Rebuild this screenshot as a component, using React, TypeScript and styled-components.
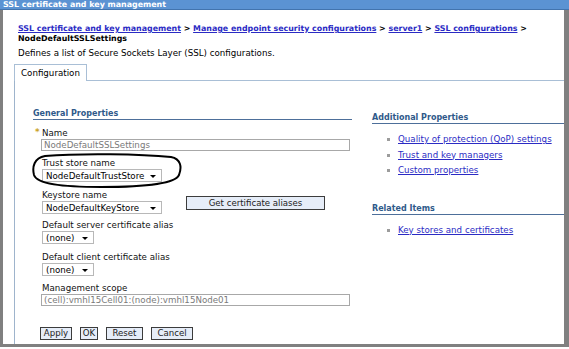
import React from 'react';
import styled, { createGlobalStyle } from 'styled-components';

const Global = createGlobalStyle`
  html, body { margin: 0; padding: 0; background: #fff; }
  body { font-family: "DejaVu Sans", Verdana, sans-serif; font-size: 8.7px; color: #000; }
  * { box-sizing: border-box; }
`;

const Window = styled.div`
  width: 569px;
  height: 347px;
  display: flex;
  flex-direction: column;
`;

const TitleBar = styled.div`
  height: 10px;
  background: #5b93d3;
  color: #fff;
  font-weight: bold;
  font-size: 7.9px;
  line-height: 9px;
  padding-left: 3px;
  border-bottom: 1px solid #4274ae;
  white-space: nowrap;
`;

const Frame = styled.div`
  flex: 1;
  display: flex;
  flex-direction: column;
  border-left: 3px solid #808080;
  border-right: 5px solid #808080;
  border-bottom: 3px solid #808080;
`;

const Breadcrumb = styled.div`
  margin: 14px 0 0 15px;
  font-weight: bold;
  font-size: 7.9px;
  line-height: 10px;
  white-space: nowrap;
`;

const CrumbLink = styled.a`
  color: #2b2bc4;
  text-decoration: underline;
`;

const Description = styled.div`
  margin: 4px 0 0 15px;
  line-height: 10px;
`;

const TabRow = styled.div`
  display: flex;
  margin: 6px 0 0 11px;
  position: relative;
  z-index: 1;
`;

const Tab = styled.div`
  height: 17px;
  padding: 0 6px;
  border: 1px solid #a9bfd6;
  border-bottom: none;
  background: #fff;
  line-height: 17px;
  margin-bottom: -1px;
`;

const Panel = styled.div`
  flex: 1;
  margin-left: 11px;
  border-left: 1px solid #9eb4cc;
  border-top: 1px solid #a9bfd6;
  display: flex;
  padding: 28px 0 0 18px;
`;

const LeftColumn = styled.div`
  width: 319px;
  display: flex;
  flex-direction: column;
  position: relative;
`;

const RightColumn = styled.div`
  flex: 1;
  margin-left: 20px;
  padding-top: 4px;
  display: flex;
  flex-direction: column;
`;

const SectionHeader = styled.div<{ $gap?: number }>`
  color: #2f5a8a;
  font-weight: bold;
  font-size: 8px;
  line-height: 9px;
  padding-bottom: 1px;
  border-bottom: 1px solid #4d6f9a;
  margin-top: ${(p) => p.$gap ?? 0}px;
`;

const Fields = styled.div`
  padding-left: 9px;
  margin-top: 9px;
  display: flex;
  flex-direction: column;
`;

const Field = styled.div<{ $gap?: number }>`
  display: flex;
  flex-direction: column;
  margin-top: ${(p) => p.$gap ?? 0}px;
`;

const Label = styled.div`
  line-height: 9px;
  margin-bottom: 1px;
  color: #111;
  position: relative;
  white-space: nowrap;
`;

const Star = styled.span`
  position: absolute;
  left: -7px;
  top: -1px;
  color: #c9a227;
  font-weight: bold;
`;

const TextInput = styled.div`
  height: 12px;
  width: 309px;
  margin-left: -1px;
  border: 1px solid #a8a8a8;
  color: #7a7a7a;
  line-height: 10px;
  padding-left: 2px;
  white-space: nowrap;
  overflow: hidden;
`;

const Select = styled.div<{ $w: number }>`
  width: ${(p) => p.$w}px;
  height: 13px;
  border: 1px solid #b8b8b8;
  display: flex;
  align-items: center;
  padding: 0 5px 0 3px;
  white-space: nowrap;
  background: #fff;
`;

const Arrow = styled.span`
  margin-left: auto;
  width: 0;
  height: 0;
  border-left: 3px solid transparent;
  border-right: 3px solid transparent;
  border-top: 3px solid #000;
  margin-top: 1px;
`;

const KeyRow = styled.div`
  display: flex;
  align-items: flex-start;
  margin-top: 9px;
`;

const Button = styled.button<{ $w: number }>`
  font-family: "DejaVu Sans", Verdana, sans-serif;
  font-size: 8.6px;
  width: ${(p) => p.$w}px;
  height: 13px;
  padding: 0;
  line-height: 11px;
  background: #e6edf8;
  border: 1px solid #3c3c3c;
  color: #222;
  cursor: pointer;
  white-space: nowrap;
`;

const AliasButton = styled(Button)`
  margin: 5px 0 0 24px;
  height: 14px;
`;

const ButtonBar = styled.div`
  display: flex;
  gap: 8px;
  margin: 21px 0 0 7px;
`;

const LinkList = styled.ul<{ $gap: number }>`
  list-style: none;
  margin: ${(p) => p.$gap}px 0 0 0;
  padding: 0 0 0 15px;
`;

const LinkItem = styled.li`
  line-height: 15.5px;
  display: flex;
  align-items: center;
  white-space: nowrap;
`;

const Bullet = styled.span`
  width: 3px;
  height: 3px;
  background: #9c9c9c;
  margin-right: 8px;
`;

const ItemLink = styled.a`
  color: #2b2bc4;
  text-decoration: underline;
`;

const Annotation = styled.svg`
  position: absolute;
  left: -2px;
  top: 44px;
  pointer-events: none;
`;

export default function App() {
  return (
    <>
      <Global />
      <Window>
        <TitleBar>SSL certificate and key management</TitleBar>
        <Frame>
          <Breadcrumb>
            <CrumbLink>SSL certificate and key management</CrumbLink> &gt;{' '}
            <CrumbLink>Manage endpoint security configurations</CrumbLink> &gt;{' '}
            <CrumbLink>server1</CrumbLink> &gt; <CrumbLink>SSL configurations</CrumbLink> &gt;
            <br />
            NodeDefaultSSLSettings
          </Breadcrumb>
          <Description>Defines a list of Secure Sockets Layer (SSL) configurations.</Description>
          <TabRow>
            <Tab>Configuration</Tab>
          </TabRow>
          <Panel>
            <LeftColumn>
              <SectionHeader>General Properties</SectionHeader>
              <Fields>
                <Field>
                  <Label>
                    <Star>*</Star>Name
                  </Label>
                  <TextInput>NodeDefaultSSLSettings</TextInput>
                </Field>
                <Field $gap={8}>
                  <Label>Trust store name</Label>
                  <Select $w={120}>
                    NodeDefaultTrustStore
                    <Arrow />
                  </Select>
                </Field>
                <KeyRow>
                  <Field>
                    <Label>Keystore name</Label>
                    <Select $w={120}>
                      NodeDefaultKeyStore
                      <Arrow />
                    </Select>
                  </Field>
                  <AliasButton $w={139}>Get certificate aliases</AliasButton>
                </KeyRow>
                <Field $gap={7}>
                  <Label>Default server certificate alias</Label>
                  <Select $w={52}>
                    (none)
                    <Arrow />
                  </Select>
                </Field>
                <Field $gap={9}>
                  <Label>Default client certificate alias</Label>
                  <Select $w={52}>
                    (none)
                    <Arrow />
                  </Select>
                </Field>
                <Field $gap={8}>
                  <Label>Management scope</Label>
                  <TextInput>(cell):vmhl15Cell01:(node):vmhl15Node01</TextInput>
                </Field>
              </Fields>
              <ButtonBar>
                <Button $w={32}>Apply</Button>
                <Button $w={18}>OK</Button>
                <Button $w={37}>Reset</Button>
                <Button $w={42}>Cancel</Button>
              </ButtonBar>
              <Annotation width="152" height="36" viewBox="0 0 152 36">
                <path
                  d="M14 3 C50 0 110 1 140 4 C150 6 151 14 148 22 C144 31 110 34 70 34 C30 34 6 31 3 22 C1 14 3 5 14 3 Z"
                  fill="none"
                  stroke="#000"
                  strokeWidth="2"
                />
              </Annotation>
            </LeftColumn>
            <RightColumn>
              <SectionHeader>Additional Properties</SectionHeader>
              <LinkList $gap={8}>
                <LinkItem>
                  <Bullet />
                  <ItemLink>Quality of protection (QoP) settings</ItemLink>
                </LinkItem>
                <LinkItem>
                  <Bullet />
                  <ItemLink>Trust and key managers</ItemLink>
                </LinkItem>
                <LinkItem>
                  <Bullet />
                  <ItemLink>Custom properties</ItemLink>
                </LinkItem>
              </LinkList>
              <SectionHeader $gap={25}>Related Items</SectionHeader>
              <LinkList $gap={8}>
                <LinkItem>
                  <Bullet />
                  <ItemLink>Key stores and certificates</ItemLink>
                </LinkItem>
              </LinkList>
            </RightColumn>
          </Panel>
        </Frame>
      </Window>
    </>
  );
}
